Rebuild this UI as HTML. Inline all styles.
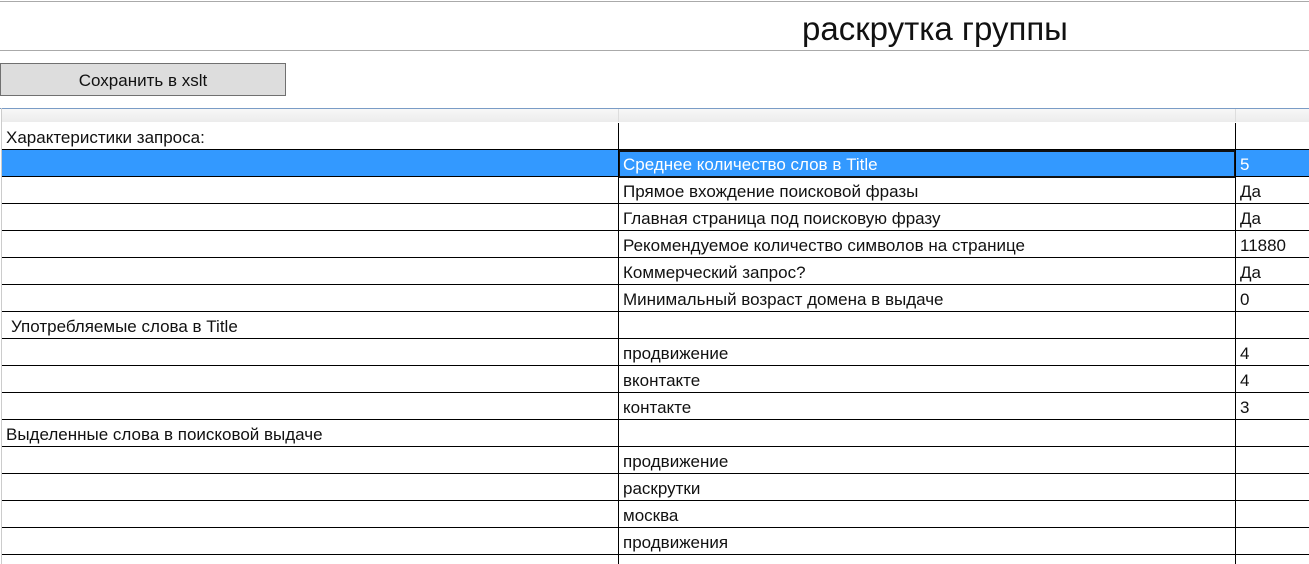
<!DOCTYPE html>
<html><head><meta charset="utf-8"><style>
body{margin:0;width:1309px;height:564px;overflow:hidden;background:#fff;font-family:"Liberation Sans","DejaVu Sans",sans-serif;position:relative}
.a{position:absolute}
.btn{left:0;top:63px;width:284px;height:31px;background:#dddddd;border:1px solid #707070;font-size:17px;text-align:center;line-height:33px;color:#111}
.row{position:absolute;left:2px;width:1307px;height:26px;border-bottom:1px solid #000;font-size:17px;color:#111}
.row span{position:absolute;top:5px;white-space:nowrap}
.c1{left:4px}.c2{left:621px}.c3{left:1238px}
.v{position:absolute;top:123px;width:1px;height:441px;background:#000}
.sel{background:#3399ff;color:#fff}
</style></head><body>
<div class="a" style="left:0;top:1px;width:1309px;height:1px;background:#aaa"></div>
<div class="a" style="left:802px;top:10px;font-size:33px;color:#111">раскрутка группы</div>
<div class="a" style="left:0;top:50px;width:1309px;height:1px;background:#aaa"></div>
<div class="a btn">Сохранить в xslt</div>
<div class="a" style="left:0;top:108px;width:1309px;height:1px;background:#7a9cc6"></div>
<div class="a" style="left:2px;top:109px;width:1307px;height:13px;background:linear-gradient(#f7f7f7,#ececec)"></div>
<div class="a" style="left:618px;top:109px;width:1px;height:13px;background:#ddd"></div>
<div class="a" style="left:1235px;top:109px;width:1px;height:13px;background:#ddd"></div>
<div class="a" style="left:1px;top:108px;width:1px;height:456px;background:#ccc"></div>

<div class="row" style="top:123px"><span class="c1">Характеристики запроса:</span></div>
<div class="row sel" style="top:150px"><span class="c2">Среднее количество слов в Title</span><span class="c3">5</span></div>
<div class="a" style="left:618px;top:150px;width:614px;height:24px;border:2px solid #111"></div>
<div class="row" style="top:177px"><span class="c2">Прямое вхождение поисковой фразы</span><span class="c3">Да</span></div>
<div class="row" style="top:204px"><span class="c2">Главная страница под поисковую фразу</span><span class="c3">Да</span></div>
<div class="row" style="top:231px"><span class="c2">Рекомендуемое количество символов на странице</span><span class="c3">11880</span></div>
<div class="row" style="top:258px"><span class="c2">Коммерческий запрос?</span><span class="c3">Да</span></div>
<div class="row" style="top:285px"><span class="c2">Минимальный возраст домена в выдаче</span><span class="c3">0</span></div>
<div class="row" style="top:312px"><span class="c1" style="left:9px">Употребляемые слова в Title</span></div>
<div class="row" style="top:339px"><span class="c2">продвижение</span><span class="c3">4</span></div>
<div class="row" style="top:366px"><span class="c2">вконтакте</span><span class="c3">4</span></div>
<div class="row" style="top:393px"><span class="c2">контакте</span><span class="c3">3</span></div>
<div class="row" style="top:420px"><span class="c1">Выделенные слова в поисковой выдаче</span></div>
<div class="row" style="top:447px"><span class="c2">продвижение</span></div>
<div class="row" style="top:474px"><span class="c2">раскрутки</span></div>
<div class="row" style="top:501px"><span class="c2">москва</span></div>
<div class="row" style="top:528px"><span class="c2">продвижения</span></div>
<div class="v" style="left:618px"></div>
<div class="v" style="left:1235px"></div>
</body></html>
